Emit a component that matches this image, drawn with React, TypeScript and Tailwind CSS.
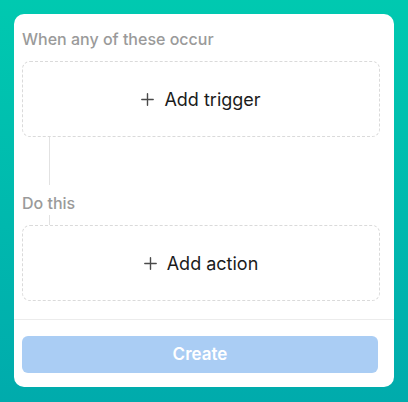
import React from "react";

function Plus() {
  return (
    <svg width="13" height="13" viewBox="0 0 13 13" fill="none" stroke="#4a4a4a" strokeWidth="1.4" strokeLinecap="round">
      <path d="M6.5 0.8v11.4M0.8 6.5h11.4" />
    </svg>
  );
}

function AddBox({ label }: { label: string }) {
  return (
    <div className="h-[76px] rounded-[8px] border border-dashed border-[#dadada] flex items-center justify-center gap-[10px]">
      <Plus />
      <span className="text-[18px] leading-[24px] pt-px text-[#1b1b1b]">{label}</span>
    </div>
  );
}

export default function App() {
  return (
    <div
      className="w-[408px] h-[402px] p-[14px] bg-gradient-to-b from-[#00c9b0] to-[#00abac]"
      style={{ fontFamily: "Inter, 'Noto Sans', sans-serif" }}
    >
      <div className="w-[380px] h-[373px] bg-white rounded-[10px] flex flex-col">
        <div className="pl-2 pr-[14px] pt-[15px] pb-[18px]">
          <div className="text-[16px] leading-[20px] font-medium text-[#9a9a9a]">When any of these occur</div>
          <div className="mt-3">
            <AddBox label="Add trigger" />
          </div>
          <div className="flex flex-col h-[88px]">
            <div className="ml-[27px] w-px h-[48px] bg-[#e2e2e2]" />
            <div className="pt-[8px] pb-[2px] text-[16px] leading-[20px] font-medium text-[#9a9a9a]">Do this</div>
            <div className="ml-[27px] w-px h-[10px] bg-[#e2e2e2]" />
          </div>
          <AddBox label="Add action" />
        </div>
        <div className="border-t border-[#ececec] pt-4 pb-[14px] pl-2 pr-4">
          <div className="h-[37px] rounded-[6px] bg-[#aacdf4] flex items-center justify-center text-white text-[17px] font-semibold">
            Create
          </div>
        </div>
      </div>
    </div>
  );
}
